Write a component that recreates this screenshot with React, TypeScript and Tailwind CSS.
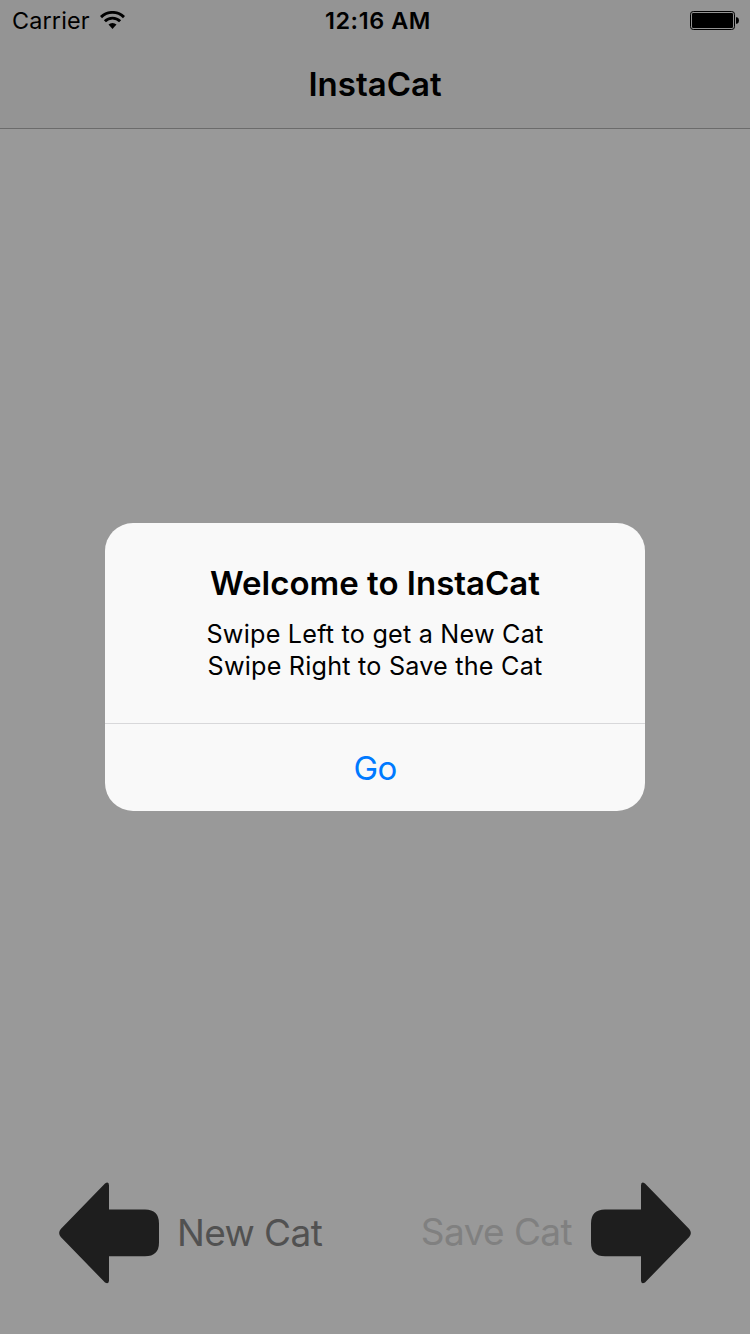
function WifiIcon() {
  return (
    <svg className="h-[18px] w-[25px]" viewBox="0 0 25 18" fill="none" stroke="#000" strokeWidth="2.9">
      <path d="M1 6.1a16.4 16.4 0 0 1 23 0" />
      <path d="M4.9 10.3a10.8 10.8 0 0 1 15.2 0" />
      <path d="M8.500 13.6a5.8 5.8 0 0 1 8 0L12.5 17.900z" fill="#000" stroke="none" />
    </svg>
  );
}

function BatteryIcon() {
  return (
    <svg className="h-[19px] w-[49px]" viewBox="0 0 49 19">
      <rect x="0.5" y="0.5" width="44" height="18" rx="2.8" fill="none" stroke="#000" />
      <rect x="2" y="2" width="41" height="15" rx="1.3" fill="#000" />
      <path d="M46 6.2h1.2q1.8 1 1.8 3.3t-1.8 3.3H46z" fill="#000" />
    </svg>
  );
}

function ArrowIcon({ flipped = false }: { flipped?: boolean }) {
  return (
    <svg className={flipped ? "h-[102px] w-[100px] -scale-x-100" : "h-[102px] w-[100px]"} viewBox="0 0 100 102" fill="#1e1e1e">
      <path d="M50 3.5V27.5H86Q100 27.5 100 41.5V60.5Q100 74.3 86 74.3H50V98.5Q50 102.5 46 100.5L1.8 55Q-1.5 51 1.8 47L46 1.5Q50 -1 50 3.5Z" />
    </svg>
  );
}

export default function App() {
  return (
    <div className="relative flex h-[1334px] w-[750px] flex-col overflow-hidden bg-[#999999] font-['Inter','Liberation_Sans',sans-serif] text-black">
      <header className="flex h-[129px] flex-col border-b border-[#6b6b6b] bg-[#949494]">
        <div className="grid h-10 grid-cols-3 items-center pr-[11px] pl-3">
          <div className="flex items-center gap-[10px]">
            <span className="pt-0.5 text-[23.4px] leading-[30px] tracking-[0.15px]">Carrier</span>
            <WifiIcon />
          </div>
          <span className="pt-0.5 pl-[5px] text-center text-[23.4px] leading-[30px] font-semibold tracking-[0.6px] whitespace-nowrap">12:16 AM</span>
          <div className="flex justify-end">
            <BatteryIcon />
          </div>
        </div>
        <h1 className="flex flex-1 items-center justify-center pt-0.5 text-[33px] font-semibold">InstaCat</h1>
      </header>

      <main className="flex flex-1 items-end justify-between px-[59px] pb-[50px]">
        <button className="flex items-center gap-[18px] text-[37px] tracking-[-0.6px] whitespace-nowrap text-[#515151]">
          <ArrowIcon />
          New Cat
        </button>
        <button className="flex items-center gap-[19px] text-[37px] tracking-[-0.6px] whitespace-nowrap text-[#808080]">
          <span className="pb-0.5">Save Cat</span>
          <ArrowIcon flipped />
        </button>
      </main>

      <div className="absolute inset-0 flex items-center justify-center">
        <section role="dialog" className="flex h-[288px] w-[540px] flex-col overflow-hidden rounded-[28px] bg-[#f9f9f9] text-center">
          <div className="flex h-[200px] flex-col pt-10">
            <h2 className="text-[33px] leading-10 font-semibold">Welcome to InstaCat</h2>
            <p className="mt-[15px] text-[25.2px] leading-8 tracking-[0.21px]">
              Swipe Left to get a New Cat
              <br />
              Swipe Right to Save the Cat
            </p>
          </div>
          <button className="flex-1 border-t border-[#d8d8da] pt-0.5 text-[33px] tracking-[-0.8px] text-[#007aff]">Go</button>
        </section>
      </div>
    </div>
  );
}
